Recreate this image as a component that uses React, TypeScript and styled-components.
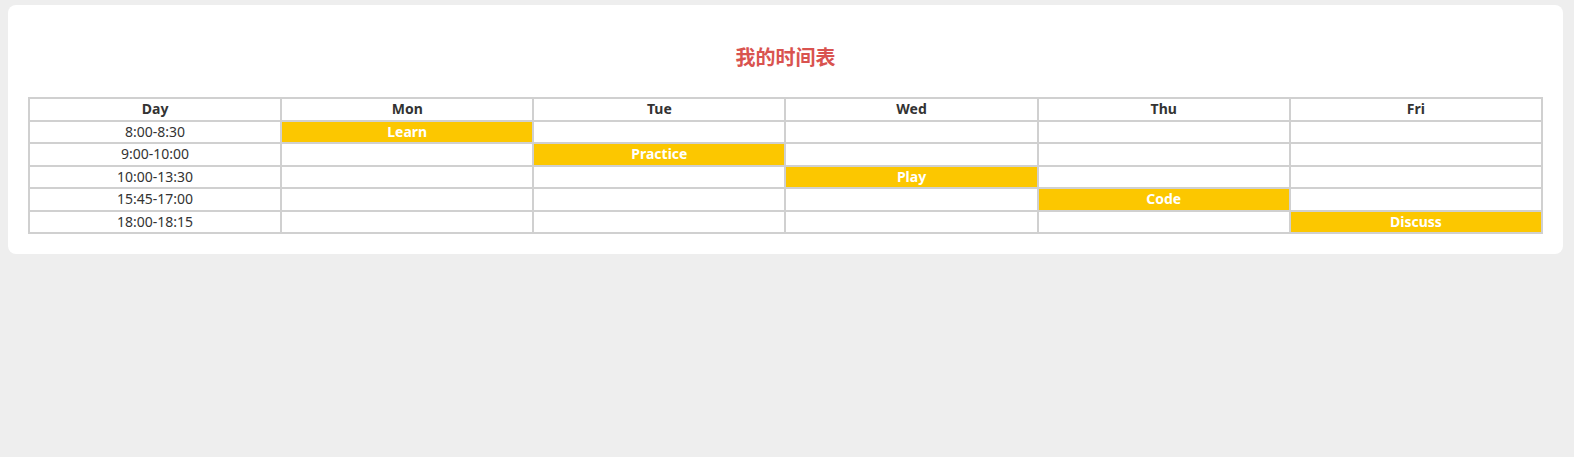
import React from 'react'
import styled, { createGlobalStyle } from 'styled-components'

const days = ['Mon', 'Tue', 'Wed', 'Thu', 'Fri']

const schedule = [
  { time: '8:00-8:30', day: 0, task: 'Learn' },
  { time: '9:00-10:00', day: 1, task: 'Practice' },
  { time: '10:00-13:30', day: 2, task: 'Play' },
  { time: '15:45-17:00', day: 3, task: 'Code' },
  { time: '18:00-18:15', day: 4, task: 'Discuss' },
]

const App: React.FC = () => {
  return (
    <>
      <GlobalStyle />
      <Card>
        <Title>我的时间表</Title>
        <Table>
          <thead>
            <tr>
              <HeadCell>Day</HeadCell>
              {days.map((d) => (
                <HeadCell key={d}>{d}</HeadCell>
              ))}
            </tr>
          </thead>
          <tbody>
            {schedule.map((row) => (
              <tr key={row.time}>
                <Cell>{row.time}</Cell>
                {days.map((d, i) =>
                  i === row.day ? (
                    <Cell key={d} $active>
                      {row.task}
                    </Cell>
                  ) : (
                    <Cell key={d} />
                  )
                )}
              </tr>
            ))}
          </tbody>
        </Table>
      </Card>
    </>
  )
}

const GlobalStyle = createGlobalStyle`
  html, body {
    margin: 0;
    padding: 0;
    background: #eeeeee;
  }
  body {
    font-family: "Noto Sans", "Noto Sans CJK SC", sans-serif;
    font-size: 14px;
    color: #333;
  }
`

const Card = styled.div`
  margin: 5px 11px 0 8px;
  padding: 20px;
  background: #fff;
  border-radius: 8px;
`

const Title = styled.h2`
  margin: 20px 0 28px;
  font-family: "Noto Sans CJK SC", "Noto Sans", sans-serif;
  font-size: 20px;
  line-height: 24px;
  font-weight: 700;
  color: #d9534f;
  text-align: center;
`

const Table = styled.table`
  width: 100%;
  table-layout: fixed;
  border-collapse: separate;
  border-spacing: 0;
  border: 1px solid #d0d0d0;
`

const HeadCell = styled.th`
  padding: 0;
  border: 1px solid #d0d0d0;
  line-height: 20.5px;
  font-weight: 700;
  color: #333;
  text-align: center;
`

const Cell = styled.td<{ $active?: boolean }>`
  padding: 0;
  border: 1px solid #d0d0d0;
  line-height: 20.5px;
  text-align: center;
  background: ${(p) => (p.$active ? '#fcc700' : '#fff')};
  color: ${(p) => (p.$active ? '#fff' : '#333')};
  font-weight: ${(p) => (p.$active ? 700 : 400)};
`

export default App
